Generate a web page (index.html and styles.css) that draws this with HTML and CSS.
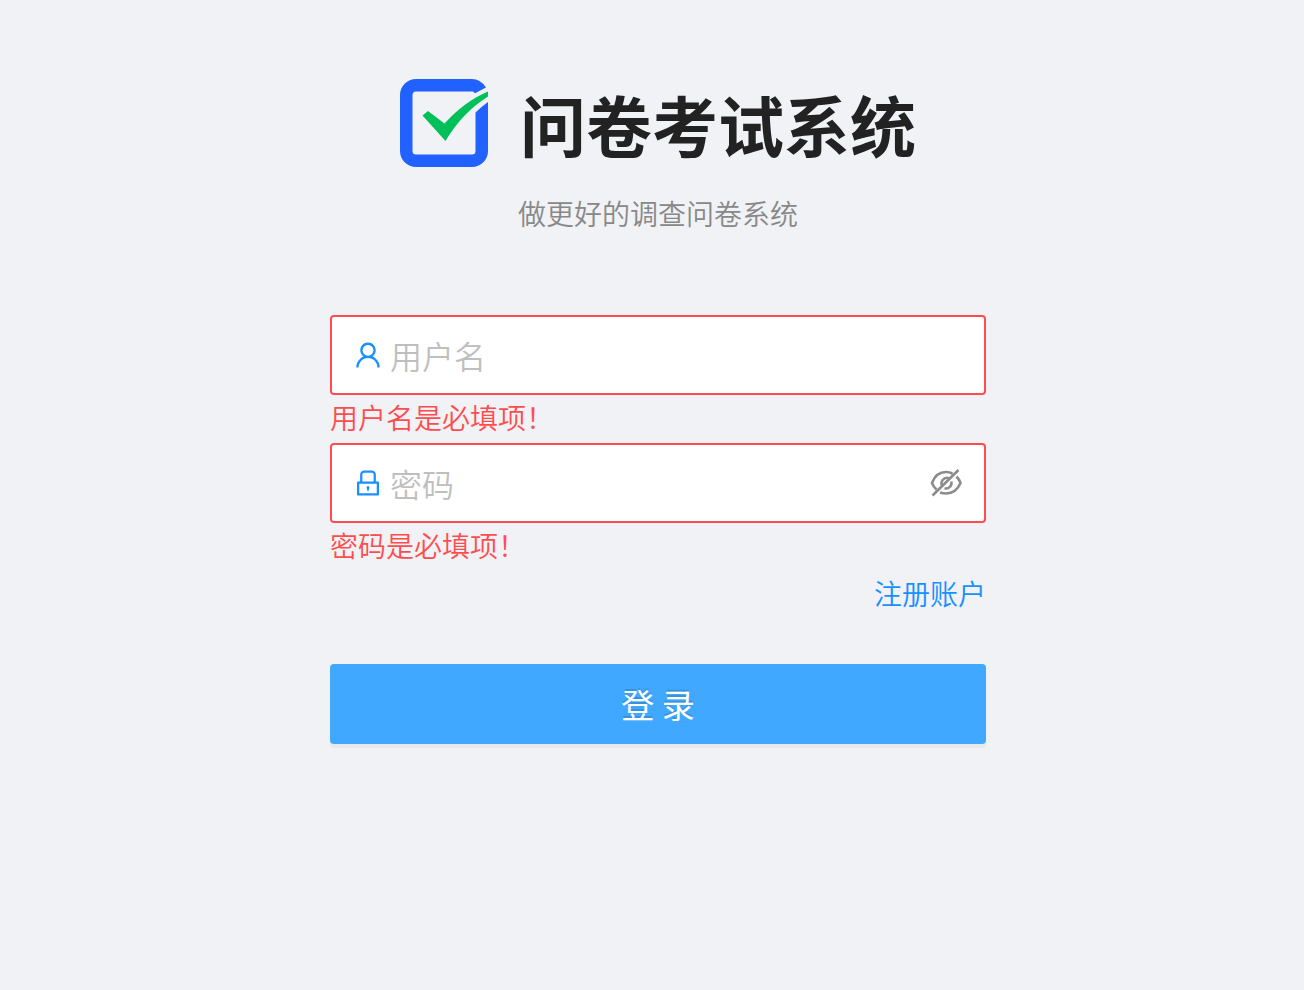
FILE: index.html
```html
<!DOCTYPE html>
<html lang="zh-CN">
<head>
    <meta charset="UTF-8">
    <meta name="viewport" content="width=device-width, initial-scale=1.0">
    <title>问卷考试系统</title>
    <link rel="stylesheet" href="styles.css">
</head>
<body>
    <main class="container">
        <header class="top">
            <div class="header">
                <svg class="logo" viewBox="0 0 88 88" aria-hidden="true">
                    <path fill="#2161ff" fill-rule="evenodd" d="M16 0H72Q80.500 0 86 8.500L75 14.200L73 12.500H16Q12.500 12.500 12.500 16V72Q12.500 75.500 16 75.500H72Q75.500 75.500 75.500 72V33.500Q81 28 88 23V72A16 16 0 0 1 72 88H16A16 16 0 0 1 0 72V16A16 16 0 0 1 16 0Z"/>
                    <path fill="#00c05a" d="M22.500 36.500L28 32L44.500 44.500C58 30 72 19 88 12.500V17.500C71 28 57 43 45.500 62Z"/>
                </svg>
                <h1 class="title">问卷考试系统</h1>
            </div>
            <p class="desc">做更好的调查问卷系统</p>
        </header>
        <form class="login-form" novalidate>
            <div class="form-item">
                <div class="input-wrapper">
                    <label class="prefix" for="username" aria-label="用户名">
                        <svg viewBox="64 64 896 896" class="icon"><path d="M858.500 763.600a374 374 0 00-80.600-119.500 375.630 375.630 0 00-119.500-80.600c-.4-.2-.8-.3-1.200-.5C719.500 518 760 444.700 760 362c0-137-111-248-248-248S264 225 264 362c0 82.700 40.500 156 102.800 201.100-.4.2-.8.3-1.200.5-44.800 18.900-85 46-119.500 80.600a375.630 375.630 0 00-80.600 119.500A371.700 371.700 0 00136 901.800a8 8 0 008 8.200h60c4.400 0 7.900-3.500 8-7.800 2-77.200 33-149.500 87.800-204.300 56.700-56.700 132-87.900 212.200-87.900s155.500 31.200 212.200 87.900C779 752.700 810 825 812 902.200c.1 4.400 3.600 7.800 8 7.800h60a8 8 0 008-8.200c-1-47.800-10.900-94.300-29.500-138.200zM512 534c-45.900 0-89.100-17.900-121.600-50.400S340 407.900 340 362c0-45.900 17.900-89.100 50.400-121.600S466.100 190 512 190s89.100 17.900 121.600 50.400S684 316.100 684 362c0 45.900-17.900 89.100-50.400 121.600S557.900 534 512 534z"/></svg>
                    </label>
                    <input type="text" id="username" placeholder="用户名" aria-describedby="username-error">
                </div>
                <div class="error" id="username-error">用户名是必填项！</div>
            </div>
            <div class="form-item">
                <div class="input-wrapper">
                    <label class="prefix" for="password" aria-label="密码">
                        <svg viewBox="64 64 896 896" class="icon"><path d="M832 464h-68V240c0-70.700-57.300-128-128-128H388c-70.700 0-128 57.300-128 128v224h-68c-17.700 0-32 14.300-32 32v384c0 17.700 14.300 32 32 32h640c17.700 0 32-14.300 32-32V496c0-17.700-14.300-32-32-32zM332 240c0-30.900 25.100-56 56-56h248c30.900 0 56 25.100 56 56v224H332V240zm460 600H232V536h560v304zM484 701v53c0 4.400 3.600 8 8 8h40c4.400 0 8-3.600 8-8v-53a48.010 48.010 0 10-56 0z"/></svg>
                    </label>
                    <input type="password" id="password" placeholder="密码" aria-describedby="password-error">
                    <button type="button" class="suffix" aria-label="显示密码">
                        <svg viewBox="0 0 32 28" class="eye" fill="none" stroke="#8c8c8c" stroke-width="2.600"><path d="M22.500 4.500Q19.500 3 16 3Q6 3 2 14Q3.500 18 6.500 20.500M26.500 7.500Q29 10 30.500 14Q26 24.500 16 24.500Q13 24.500 10 23.500M12.500 17.500A5.500 5.500 0 0 1 19 9.200M21.300 12.500A5.500 5.500 0 0 1 14.500 19.200M2.500 26.500L28.500 1"/></svg>
                    </button>
                </div>
                <div class="error" id="password-error">密码是必填项！</div>
            </div>
            <div class="links"><a href="#">注册账户</a></div>
            <button type="submit" class="submit">登 录</button>
        </form>
    </main>
</body>
</html>
```
FILE: styles.css
```css
* {
    box-sizing: border-box;
}

body {
    margin: 0;
    min-height: 100vh;
    background: #f0f2f5;
    font-family: "Noto Sans CJK SC", sans-serif;
    font-size: 28px;
    font-weight: 350;
    line-height: 44px;
}

.container {
    padding: 79px 0 48px 12px;
}

.top {
    text-align: center;
}

.header {
    display: flex;
    align-items: center;
    justify-content: center;
    gap: 32px;
    height: 88px;
}

.logo {
    width: 88px;
    height: 88px;
}

.title {
    margin: 0;
    color: #222;
    font-size: 66px;
    font-weight: 700;
    line-height: 88px;
}

.desc {
    margin: 24px 0 80px;
    color: #888;
}

.login-form {
    width: 656px;
    max-width: 100%;
    margin: 0 auto;
}

.form-item {
    margin-bottom: 4px;
}

.input-wrapper {
    display: flex;
    align-items: center;
    height: 80px;
    padding: 0 22px;
    background: #fff;
    border: 2px solid #ff4d4f;
    border-radius: 4px;
}

.prefix {
    display: flex;
    margin-right: 8px;
}

.icon {
    width: 28px;
    height: 28px;
    fill: #1890ff;
}

.input-wrapper input {
    flex: 1;
    min-width: 0;
    padding: 0;
    border: none;
    outline: none;
    background: none;
    color: #222;
    font: inherit;
    font-size: 32px;
}

.input-wrapper input::placeholder {
    color: #bfbfbf;
}

.suffix {
    display: flex;
    padding: 0;
    border: none;
    background: none;
    cursor: pointer;
}

.eye {
    width: 32px;
    height: 28px;
}

.error {
    color: #ff4d4f;
}

.links {
    text-align: right;
}

.links a {
    color: #1890ff;
    text-decoration: none;
}

.submit {
    display: block;
    width: 100%;
    height: 80px;
    margin-top: 49px;
    border: none;
    border-radius: 4px;
    background: #40a9ff;
    box-shadow: 0 4px 0 rgba(0, 0, 0, 0.04);
    color: #fff;
    font-family: inherit;
    font-size: 33px;
    font-weight: 400;
    text-shadow: 0 -2px 0 rgba(0, 0, 0, 0.12);
    cursor: pointer;
}
```
